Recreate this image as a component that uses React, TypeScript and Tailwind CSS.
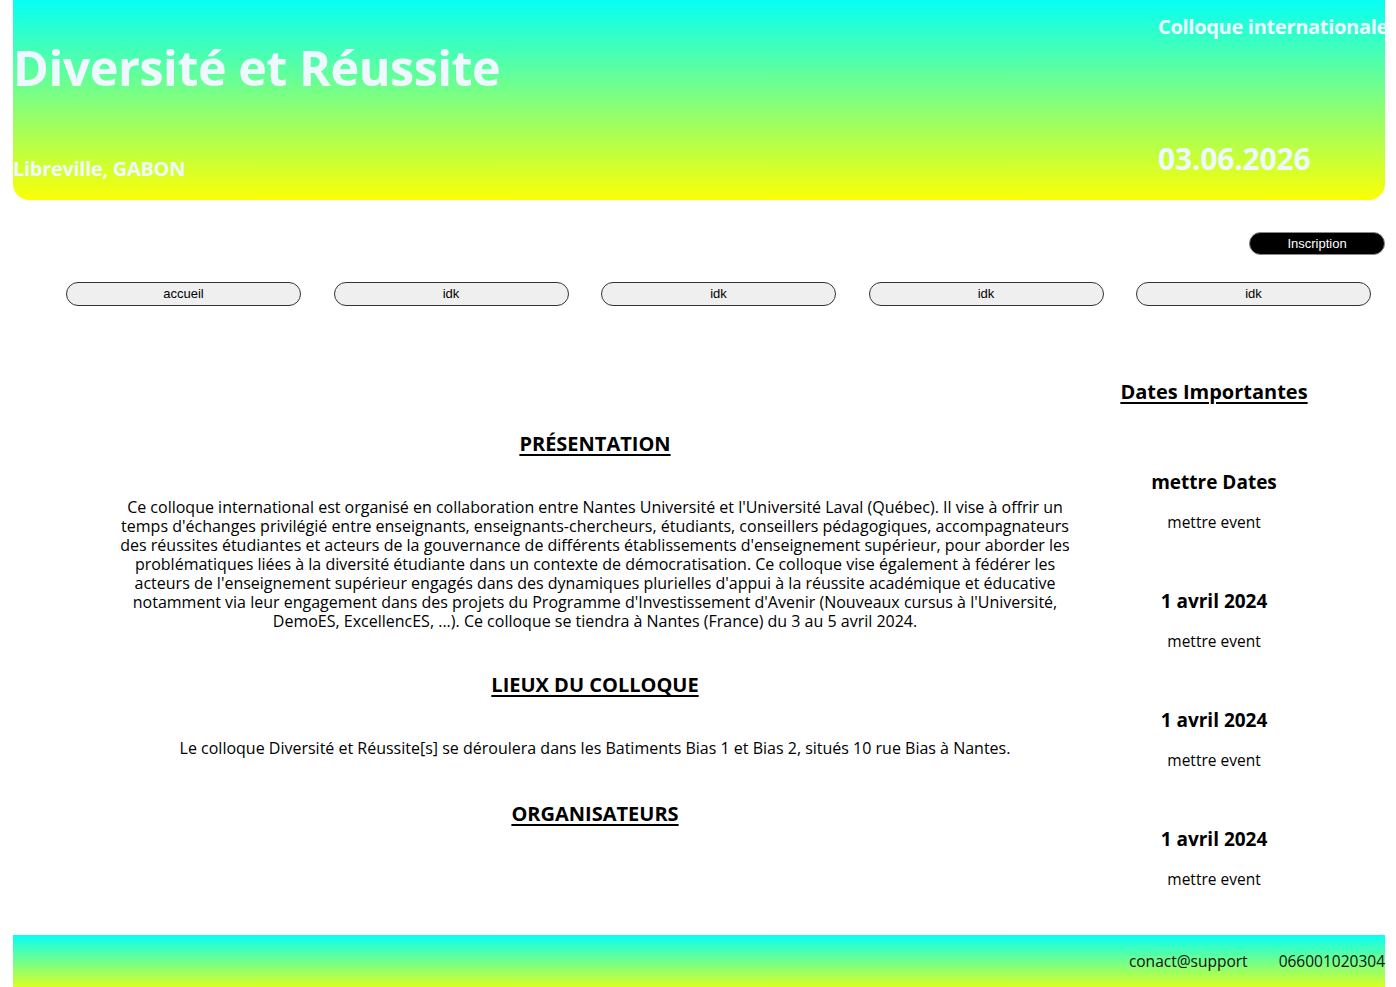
import React from "react";

const font = { fontFamily: '"Open Sans", "Noto Sans", sans-serif' };

const navItems = ["accueil", "idk", "idk", "idk", "idk"];

const dates = [
  { d: "mettre Dates", e: "mettre event" },
  { d: "1 avril 2024", e: "mettre event" },
  { d: "1 avril 2024", e: "mettre event" },
  { d: "1 avril 2024", e: "mettre event" },
];

export default function App() {
  return (
    <div className="w-[1396px] min-h-[987px] bg-white text-black overflow-hidden" style={font}>
      {/* Header */}
      <header className="ml-[13px] mr-[11px] h-[200px] rounded-b-2xl bg-[linear-gradient(to_bottom,#06fff4,#fbff05)] flex justify-between text-[#f0f8ff]">
        <div className="flex flex-col">
          <h1 className="mt-[37px] text-[48.5px] leading-[60px] font-bold tracking-[-0.5px]">Diversité et Réussite</h1>
          <p className="mt-[60px] text-[20px] leading-[24px] font-bold tracking-[-0.3px]">Libreville, GABON</p>
        </div>
        <div className="w-[227px] flex flex-col">
          <p className="mt-[15px] text-[20px] leading-[24px] font-bold whitespace-nowrap tracking-[-0.3px]">Colloque internationale</p>
          <p className="mt-[101px] text-[30px] leading-[38px] font-bold tracking-[-0.2px]">03.06.2026</p>
        </div>
      </header>

      {/* Inscription */}
      <div className="flex justify-end pr-[11px] mt-[32px]">
        <button className="w-[136px] h-[23px] rounded-full bg-black border border-[#888] text-white text-[13px]" style={{ fontFamily: '"Liberation Sans", Arial, sans-serif' }}>
          Inscription
        </button>
      </div>

      {/* Nav */}
      <nav className="flex justify-between pl-[66px] pr-[25px] mt-[27px]">
        {navItems.map((n, i) => (
          <button
            key={i}
            className="w-[235px] h-[24px] rounded-full bg-[#efefef] border border-[#333] text-black text-[13px]"
            style={{ fontFamily: '"Liberation Sans", Arial, sans-serif' }}
          >
            {n}
          </button>
        ))}
      </nav>

      {/* Content */}
      <div className="flex mt-[74px] pl-[100px]">
        <main className="w-[990px] flex flex-col items-center text-center pt-[52px]">
          <h2 className="text-[20px] leading-[24px] font-bold underline underline-offset-[3px]">PRÉSENTATION</h2>
          <p className="mt-[42px] text-[16px] leading-[19px] whitespace-nowrap">
            Ce colloque international est organisé en collaboration entre Nantes Université et l'Université Laval (Québec). Il vise à offrir un
            <br />
            temps d'échanges privilégié entre enseignants, enseignants-chercheurs, étudiants, conseillers pédagogiques, accompagnateurs
            <br />
            des réussites étudiantes et acteurs de la gouvernance de différents établissements d'enseignement supérieur, pour aborder les
            <br />
            problématiques liées à la diversité étudiante dans un contexte de démocratisation. Ce colloque vise également à fédérer les
            <br />
            acteurs de l'enseignement supérieur engagés dans des dynamiques plurielles d'appui à la réussite académique et éducative
            <br />
            notamment via leur engagement dans des projets du Programme d'Investissement d'Avenir (Nouveaux cursus à l'Université,
            <br />
            DemoES, ExcellencES, ...). Ce colloque se tiendra à Nantes (France) du 3 au 5 avril 2024.
          </p>
          <h2 className="mt-[42px] text-[20px] leading-[24px] font-bold underline underline-offset-[3px]">LIEUX DU COLLOQUE</h2>
          <p className="mt-[42px] text-[16px] leading-[19px] whitespace-nowrap">
            Le colloque Diversité et Réussite[s] se déroulera dans les Batiments Bias 1 et Bias 2, situés 10 rue Bias à Nantes.
          </p>
          <h2 className="mt-[44px] text-[20px] leading-[24px] font-bold underline underline-offset-[3px]">ORGANISATEURS</h2>
        </main>
        <aside className="w-[248px] flex flex-col items-center text-center">
          <h2 className="text-[20px] leading-[24px] font-bold underline underline-offset-[3px] whitespace-nowrap">Dates Importantes</h2>
          <div className="mt-[66px] flex flex-col items-center gap-[57px]">
            {dates.map((x, i) => (
              <div key={i} className="flex flex-col items-center">
                <h3 className="text-[19px] leading-[24px] font-bold whitespace-nowrap">{x.d}</h3>
                <p className="mt-[19px] text-[15.5px] leading-[19px] whitespace-nowrap">{x.e}</p>
              </div>
            ))}
          </div>
        </aside>
      </div>

      {/* Footer */}
      <footer className="mt-[46px] ml-[13px] mr-[11px] h-[60px] bg-[linear-gradient(to_bottom,#06fff4,#fbff05)] flex justify-end items-start pt-[17px] gap-[31px] text-[15.5px] leading-[19px] text-[#111]">
        <span>conact@support</span>
        <span>066001020304</span>
      </footer>
    </div>
  );
}
